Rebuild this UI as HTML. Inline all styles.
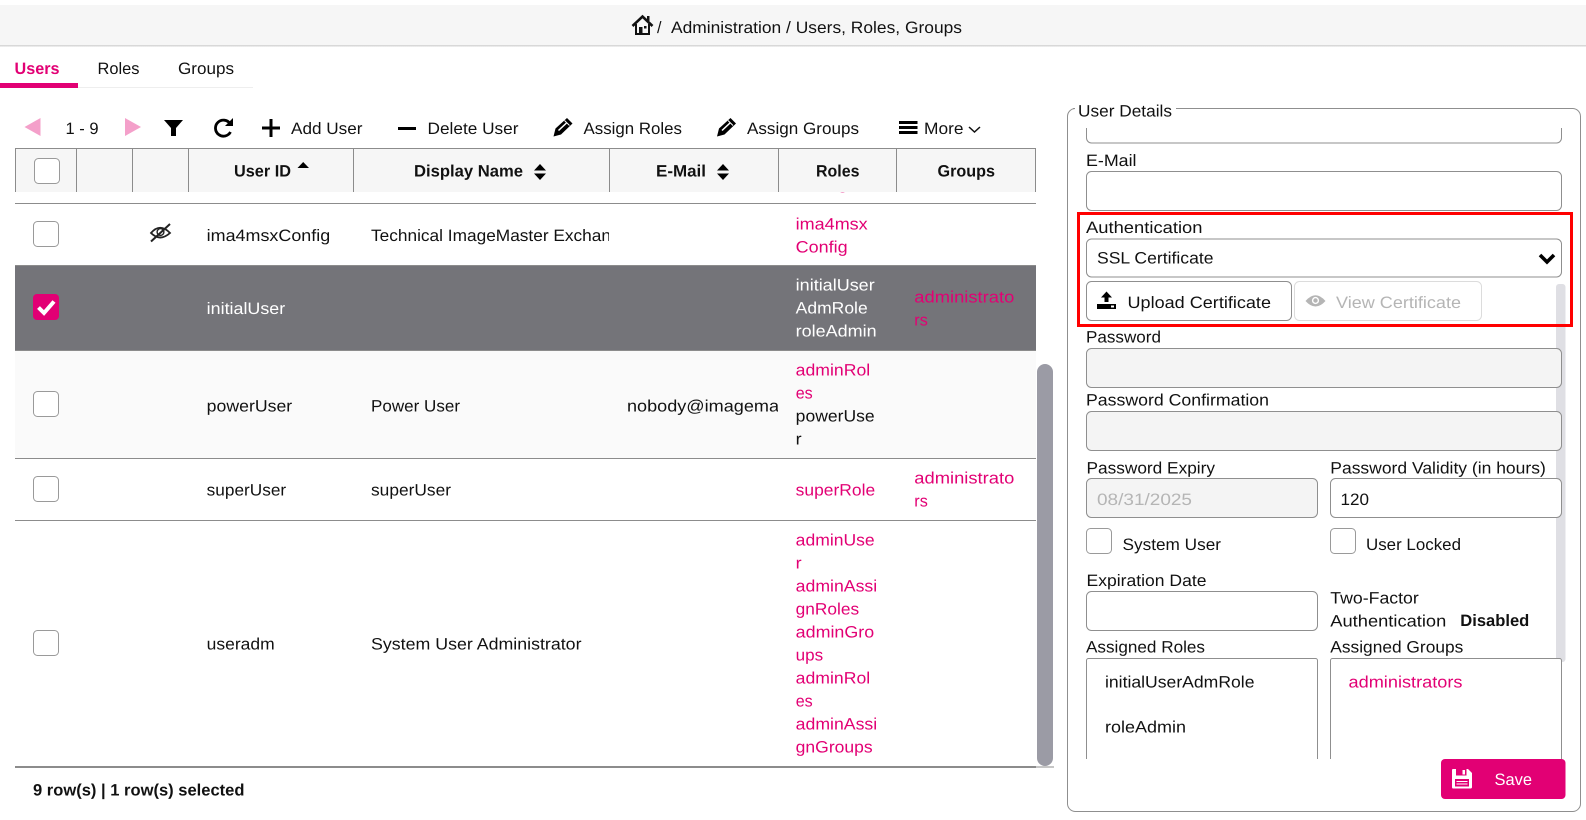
<!DOCTYPE html>
<html><head><meta charset="utf-8"><title>Users, Roles, Groups</title>
<style>
html,body{margin:0;padding:0;background:#fff;overflow:hidden;width:1586px;height:820px}
svg{display:block}
text{font-family:"Liberation Sans",sans-serif;font-size:16.5px;fill:#111}
.b{font-weight:bold}
.p{fill:#e20074}
.w{fill:#fff}
.g{fill:#b5b5b5}
.box{fill:#fff;stroke:#8f8f8f;stroke-width:1}
.dis{fill:#f4f4f4;stroke:#8f8f8f;stroke-width:1}
.cb{fill:#fff;stroke:#9a9a9a;stroke-width:1}
.ln{stroke:#8c8c8c;stroke-width:1}
</style></head>
<body>
<svg width="1586" height="820" viewBox="0 0 1586 820" xmlns="http://www.w3.org/2000/svg" text-rendering="geometricPrecision">
<defs>
<linearGradient id="sh" x1="0" y1="0" x2="0" y2="1"><stop offset="0" stop-color="#cfcfcf"/><stop offset="1" stop-color="#f4f4f4"/></linearGradient>
<clipPath id="tbl"><rect x="15" y="192" width="1021" height="574"/></clipPath>
<clipPath id="dn"><rect x="353" y="192" width="256" height="574"/></clipPath>
<clipPath id="em"><rect x="610" y="192" width="168" height="574"/></clipPath>
<clipPath id="det"><rect x="1068" y="128" width="512" height="631"/></clipPath>
</defs>

<!-- breadcrumb -->
<rect x="0" y="5" width="1586" height="40" fill="#f6f6f6"/>
<rect x="0" y="45" width="1586" height="2" fill="url(#sh)"/>
<path d="M632.5 26 L642.5 16.5 L652.5 26" fill="none" stroke="#111" stroke-width="2.6"/>
<path d="M636 24 V34 H649 V24" fill="none" stroke="#111" stroke-width="2"/>
<rect x="639" y="27" width="3.5" height="7" fill="#111"/><rect x="644" y="26" width="2.5" height="2.5" fill="#111"/>
<rect x="647" y="16" width="2.5" height="5" fill="#111"/>
<text x="657" y="33" textLength="4.5" lengthAdjust="spacingAndGlyphs">/</text>
<text x="671" y="33" textLength="291" lengthAdjust="spacingAndGlyphs">Administration / Users, Roles, Groups</text>

<!-- tabs -->
<text x="14.5" y="74" class="b p" textLength="45" lengthAdjust="spacingAndGlyphs">Users</text>
<text x="97.5" y="74" textLength="42" lengthAdjust="spacingAndGlyphs">Roles</text>
<text x="178" y="74" textLength="56" lengthAdjust="spacingAndGlyphs">Groups</text>
<rect x="0" y="87" width="253" height="1" fill="#eeeeee"/>
<rect x="0" y="83" width="78" height="5" fill="#e20074"/>

<!-- toolbar -->
<polygon points="40.5,118 40.5,136 24.5,127" fill="#f4a0ca"/>
<text x="65.5" y="134" textLength="33" lengthAdjust="spacingAndGlyphs">1 - 9</text>
<polygon points="125,118 125,136 141,127" fill="#f4a0ca"/>
<polygon points="164,120 183,120 176,128 176,136 171,136 171,128" fill="#000"/>
<path d="M230 123.5 A8 8 0 1 0 230.5 132" fill="none" stroke="#000" stroke-width="2.8"/>
<polygon points="233,118 233,126 225,126" fill="#000"/>
<rect x="262" y="126.5" width="18" height="3" fill="#000"/><rect x="269.5" y="119" width="3" height="18" fill="#000"/>
<text x="291" y="134" textLength="71.5" lengthAdjust="spacingAndGlyphs">Add User</text>
<rect x="398" y="127" width="18" height="3" fill="#000"/>
<text x="427.5" y="134" textLength="91" lengthAdjust="spacingAndGlyphs">Delete User</text>
<polygon points="553.5,136.5 555.5,128.5 567,118 572.5,123.5 561,134.5" fill="#000"/>
<path d="M558.5 130.5 L566.5 123" stroke="#fff" stroke-width="1.5"/><path d="M564.5 120.5 L569.5 125.5" stroke="#fff" stroke-width="1"/>
<text x="583.5" y="134" textLength="98.5" lengthAdjust="spacingAndGlyphs">Assign Roles</text>
<g transform="translate(163.5 0)"><polygon points="553.5,136.5 555.5,128.5 567,118 572.5,123.5 561,134.5" fill="#000"/>
<path d="M558.5 130.5 L566.5 123" stroke="#fff" stroke-width="1.5"/><path d="M564.5 120.5 L569.5 125.5" stroke="#fff" stroke-width="1"/></g>
<text x="747" y="134" textLength="112" lengthAdjust="spacingAndGlyphs">Assign Groups</text>
<rect x="899" y="121" width="18.5" height="3" fill="#000"/><rect x="899" y="126" width="18.5" height="3" fill="#000"/><rect x="899" y="131" width="18.5" height="3" fill="#000"/>
<text x="924" y="134" textLength="39.5" lengthAdjust="spacingAndGlyphs">More</text>
<path d="M969 127 L974.5 132 L980 127" fill="none" stroke="#111" stroke-width="1.5"/>

<!-- table body -->
<rect x="15" y="265" width="1021" height="86" fill="#747479"/>
<rect x="15" y="351" width="1021" height="107" fill="#fafafa"/>
<g clip-path="url(#tbl)">
<text x="795.7" y="189" class="p" textLength="52" lengthAdjust="spacingAndGlyphs">Config</text>
<rect x="15" y="203" width="1021" height="1" fill="#8c8c8c"/>
<rect x="15" y="265" width="1021" height="1" fill="#8c8c8c"/>
<rect x="15" y="350" width="1021" height="1" fill="#8c8c8c"/>
<rect x="15" y="458" width="1021" height="1" fill="#8c8c8c"/>
<rect x="15" y="520" width="1021" height="1" fill="#8c8c8c"/>

<!-- row 1 -->
<rect x="33.5" y="221.5" width="25" height="25" rx="4" class="cb"/>
<path d="M151 233 Q160 222.5 170 233 Q160 242 151 233Z" fill="none" stroke="#222" stroke-width="1.8"/>
<circle cx="160.5" cy="232" r="3.4" fill="none" stroke="#222" stroke-width="1.4"/>
<path d="M151 241.5 L170 224" stroke="#222" stroke-width="2"/>
<text x="206.7" y="241" textLength="123.5" lengthAdjust="spacingAndGlyphs">ima4msxConfig</text>
<g clip-path="url(#dn)"><text x="371" y="241" textLength="240" lengthAdjust="spacingAndGlyphs">Technical ImageMaster Exchan</text></g>
<text x="795.7" y="229.5" class="p" textLength="72" lengthAdjust="spacingAndGlyphs">ima4msx</text>
<text x="795.7" y="252.5" class="p" textLength="52" lengthAdjust="spacingAndGlyphs">Config</text>

<!-- row 2 selected -->
<rect x="33" y="294" width="26" height="26" rx="4" fill="#e20074"/>
<path d="M38.5 307.5 L44 313 L54 301.5" fill="none" stroke="#fff" stroke-width="4"/>
<text x="206.7" y="314" class="w" textLength="78.5" lengthAdjust="spacingAndGlyphs">initialUser</text>
<text x="795.7" y="290.5" class="w" textLength="79" lengthAdjust="spacingAndGlyphs">initialUser</text>
<text x="795.7" y="313.5" class="w" textLength="72" lengthAdjust="spacingAndGlyphs">AdmRole</text>
<text x="795.7" y="336.5" class="w" textLength="81" lengthAdjust="spacingAndGlyphs">roleAdmin</text>
<text x="914.3" y="302.5" class="p" textLength="100" lengthAdjust="spacingAndGlyphs">administrato</text>
<text x="914.3" y="325.5" class="p" textLength="13.5" lengthAdjust="spacingAndGlyphs">rs</text>

<!-- row 3 -->
<rect x="33.5" y="391.5" width="25" height="25" rx="4" class="cb"/>
<text x="206.7" y="411.5" textLength="85.5" lengthAdjust="spacingAndGlyphs">powerUser</text>
<text x="371" y="411.5" textLength="89" lengthAdjust="spacingAndGlyphs">Power User</text>
<g clip-path="url(#em)"><text x="627" y="411.5" textLength="152" lengthAdjust="spacingAndGlyphs">nobody@imagema</text></g>
<text x="795.7" y="375.5" class="p" textLength="74.5" lengthAdjust="spacingAndGlyphs">adminRol</text>
<text x="795.7" y="398.5" class="p" textLength="17" lengthAdjust="spacingAndGlyphs">es</text>
<text x="795.7" y="421.5" textLength="79" lengthAdjust="spacingAndGlyphs">powerUse</text>
<text x="795.7" y="444.5" textLength="6" lengthAdjust="spacingAndGlyphs">r</text>

<!-- row 4 -->
<rect x="33.5" y="476.5" width="25" height="25" rx="4" class="cb"/>
<text x="206.7" y="495.5" textLength="79.5" lengthAdjust="spacingAndGlyphs">superUser</text>
<text x="371" y="495.5" textLength="80" lengthAdjust="spacingAndGlyphs">superUser</text>
<text x="795.7" y="495.5" class="p" textLength="79.5" lengthAdjust="spacingAndGlyphs">superRole</text>
<text x="914.3" y="483.5" class="p" textLength="100" lengthAdjust="spacingAndGlyphs">administrato</text>
<text x="914.3" y="506.5" class="p" textLength="13.5" lengthAdjust="spacingAndGlyphs">rs</text>

<!-- row 5 -->
<rect x="33.5" y="630.5" width="25" height="25" rx="4" class="cb"/>
<text x="206.7" y="649.5" textLength="68" lengthAdjust="spacingAndGlyphs">useradm</text>
<text x="371" y="649.5" textLength="210.5" lengthAdjust="spacingAndGlyphs">System User Administrator</text>
<text x="795.7" y="545.5" class="p" textLength="79" lengthAdjust="spacingAndGlyphs">adminUse</text>
<text x="795.7" y="568.5" class="p" textLength="6" lengthAdjust="spacingAndGlyphs">r</text>
<text x="795.7" y="591.5" class="p" textLength="81.5" lengthAdjust="spacingAndGlyphs">adminAssi</text>
<text x="795.7" y="614.5" class="p" textLength="63.5" lengthAdjust="spacingAndGlyphs">gnRoles</text>
<text x="795.7" y="637.5" class="p" textLength="78.5" lengthAdjust="spacingAndGlyphs">adminGro</text>
<text x="795.7" y="660.5" class="p" textLength="27.5" lengthAdjust="spacingAndGlyphs">ups</text>
<text x="795.7" y="683.5" class="p" textLength="74.5" lengthAdjust="spacingAndGlyphs">adminRol</text>
<text x="795.7" y="706.5" class="p" textLength="17" lengthAdjust="spacingAndGlyphs">es</text>
<text x="795.7" y="729.5" class="p" textLength="81.5" lengthAdjust="spacingAndGlyphs">adminAssi</text>
<text x="795.7" y="752.5" class="p" textLength="77" lengthAdjust="spacingAndGlyphs">gnGroups</text>
</g>

<!-- table header -->
<rect x="15" y="148" width="1021" height="44" fill="#f6f6f6"/>
<rect x="15" y="148" width="1021" height="1" fill="#8c8c8c"/>
<g fill="#8c8c8c">
<rect x="15" y="148" width="1" height="44"/><rect x="76" y="148" width="1" height="44"/><rect x="132" y="148" width="1" height="44"/><rect x="188" y="148" width="1" height="44"/><rect x="353" y="148" width="1" height="44"/><rect x="609" y="148" width="1" height="44"/><rect x="778" y="148" width="1" height="44"/><rect x="896" y="148" width="1" height="44"/><rect x="1035" y="148" width="1" height="44"/>
</g>
<rect x="34.5" y="158.5" width="25" height="25" rx="4" class="cb"/>
<text x="234" y="176.5" class="b" textLength="57" lengthAdjust="spacingAndGlyphs">User ID</text>
<polygon points="297.5,168 309,168 303.2,162" fill="#000"/>
<text x="414" y="176.5" class="b" textLength="109" lengthAdjust="spacingAndGlyphs">Display Name</text>
<polygon points="534,170.5 546,170.5 540,164" fill="#000"/><polygon points="534,173.5 546,173.5 540,180" fill="#000"/>
<text x="656" y="176.5" class="b" textLength="50" lengthAdjust="spacingAndGlyphs">E-Mail</text>
<polygon points="717,170.5 729,170.5 723,164" fill="#000"/><polygon points="717,173.5 729,173.5 723,180" fill="#000"/>
<text x="816" y="176.5" class="b" textLength="43.5" lengthAdjust="spacingAndGlyphs">Roles</text>
<text x="937.5" y="176.5" class="b" textLength="57.5" lengthAdjust="spacingAndGlyphs">Groups</text>

<!-- table foot + scrollbar -->
<rect x="15" y="766" width="1021" height="2" fill="#8c8c8c"/>
<rect x="1036" y="766.5" width="18" height="1" fill="#8c8c8c"/>
<rect x="1037" y="364" width="16" height="402" rx="8" fill="#9b9ba5"/>
<text x="33" y="795.5" class="b" textLength="211.5" lengthAdjust="spacingAndGlyphs">9 row(s) | 1 row(s) selected</text>

<!-- details fieldset -->
<path d="M1073 108.5 H1075 M1176 108.5 H1572 A8 8 0 0 1 1580.5 116.5 V803 A8 8 0 0 1 1572 811.5 H1075 A8 8 0 0 1 1067.5 803 V116.5 A8 8 0 0 1 1075 108.5" fill="none" stroke="#8f8f8f" stroke-width="1"/>
<text x="1078" y="116.5" textLength="94" lengthAdjust="spacingAndGlyphs">User Details</text>

<rect x="1556" y="284" width="9.5" height="378" rx="3" fill="#dfdfe4"/>

<g clip-path="url(#det)">
<rect x="1086.5" y="100" width="475" height="43" rx="5" class="box"/>
<text x="1086" y="166" textLength="50.5" lengthAdjust="spacingAndGlyphs">E-Mail</text>
<rect x="1086.5" y="171.5" width="475" height="39" rx="5" class="box"/>

<text x="1086" y="233" textLength="116.5" lengthAdjust="spacingAndGlyphs">Authentication</text>
<rect x="1086.5" y="239" width="475" height="38" rx="5" class="box"/>
<text x="1097" y="263.5" textLength="116.5" lengthAdjust="spacingAndGlyphs">SSL Certificate</text>
<path d="M1540 255 L1547 262 L1554 255" fill="none" stroke="#000" stroke-width="3.6"/>

<rect x="1086.5" y="281.5" width="205" height="39" rx="5" class="box"/>
<polygon points="1106.5,291.5 1112,297.5 1108.5,297.5 1108.5,302 1104.5,302 1104.5,297.5 1101,297.5" fill="#000"/>
<rect x="1097" y="304" width="19" height="5" fill="#000"/><rect x="1111" y="305.5" width="3" height="2" fill="#fff"/>
<text x="1127.5" y="308" textLength="143.5" lengthAdjust="spacingAndGlyphs">Upload Certificate</text>
<rect x="1294.5" y="281.5" width="187" height="39" rx="5" fill="#fff" stroke="#dcdcdc"/>
<path d="M1305.5 301 Q1315.5 289.5 1325.5 301 Q1315.5 312 1305.5 301Z" fill="#b5b5b5"/>
<circle cx="1315.5" cy="300.5" r="3.6" fill="#fff"/><circle cx="1315.5" cy="300.5" r="2.2" fill="#b5b5b5"/>
<text x="1336" y="308" class="g" textLength="125" lengthAdjust="spacingAndGlyphs">View Certificate</text>

<text x="1086" y="342.5" textLength="75" lengthAdjust="spacingAndGlyphs">Password</text>
<rect x="1086.5" y="348.5" width="475" height="39" rx="5" class="dis"/>
<text x="1086" y="405.5" textLength="183" lengthAdjust="spacingAndGlyphs">Password Confirmation</text>
<rect x="1086.5" y="411.5" width="475" height="39" rx="5" class="dis"/>

<text x="1086.5" y="473.5" textLength="128.5" lengthAdjust="spacingAndGlyphs">Password Expiry</text>
<rect x="1086.5" y="478.5" width="231" height="39" rx="5" class="dis"/>
<text x="1097" y="505" class="g" textLength="95" lengthAdjust="spacingAndGlyphs">08/31/2025</text>
<text x="1330.3" y="473.5" textLength="215.5" lengthAdjust="spacingAndGlyphs">Password Validity (in hours)</text>
<rect x="1330.5" y="478.5" width="231" height="39" rx="5" class="box"/>
<text x="1340.5" y="505" textLength="28.5" lengthAdjust="spacingAndGlyphs">120</text>

<rect x="1086.5" y="528.5" width="25" height="25" rx="4" class="cb"/>
<text x="1122.5" y="550" textLength="98.5" lengthAdjust="spacingAndGlyphs">System User</text>
<rect x="1330.5" y="528.5" width="25" height="25" rx="4" class="cb"/>
<text x="1366" y="550" textLength="95" lengthAdjust="spacingAndGlyphs">User Locked</text>

<text x="1086.5" y="586" textLength="120" lengthAdjust="spacingAndGlyphs">Expiration Date</text>
<rect x="1086.5" y="591.5" width="231" height="39" rx="5" class="box"/>
<text x="1330.3" y="603.5" textLength="88.5" lengthAdjust="spacingAndGlyphs">Two-Factor</text>
<text x="1330.3" y="626.5" textLength="116" lengthAdjust="spacingAndGlyphs">Authentication</text>
<text x="1460.3" y="626" class="b" textLength="69" lengthAdjust="spacingAndGlyphs">Disabled</text>

<text x="1086" y="652.5" textLength="119" lengthAdjust="spacingAndGlyphs">Assigned Roles</text>
<text x="1330.3" y="652.5" textLength="133" lengthAdjust="spacingAndGlyphs">Assigned Groups</text>
<rect x="1086.5" y="658.5" width="231" height="140" rx="2" class="box"/>
<rect x="1330.5" y="658.5" width="231" height="140" rx="2" class="box"/>
<text x="1105" y="687.5" textLength="149.5" lengthAdjust="spacingAndGlyphs">initialUserAdmRole</text>
<text x="1105" y="732.5" textLength="81" lengthAdjust="spacingAndGlyphs">roleAdmin</text>
<text x="1348.5" y="687.5" class="p" textLength="114" lengthAdjust="spacingAndGlyphs">administrators</text>
</g>

<!-- red highlight -->
<rect x="1078.5" y="213.5" width="493" height="112" fill="none" stroke="#ff0000" stroke-width="3"/>

<!-- save -->
<rect x="1441" y="759" width="124.5" height="40" rx="4" fill="#e20074"/>
<path d="M1452 770 Q1452 769 1453 769 H1468 L1472 773 V787 Q1472 788.5 1470.5 788.5 H1453 Q1452 788.5 1452 787Z" fill="#fff"/>
<rect x="1456" y="769" width="10.5" height="6.5" fill="#e20074"/><rect x="1462.5" y="770" width="2.5" height="4.5" fill="#fff"/>
<rect x="1455" y="779" width="14" height="7.5" fill="#e20074"/><rect x="1456.5" y="781" width="11" height="1" fill="#fff"/><rect x="1456.5" y="783.5" width="11" height="1" fill="#fff"/>
<text x="1494.5" y="785" class="w" textLength="37.5" lengthAdjust="spacingAndGlyphs">Save</text>
</svg>
</body></html>
